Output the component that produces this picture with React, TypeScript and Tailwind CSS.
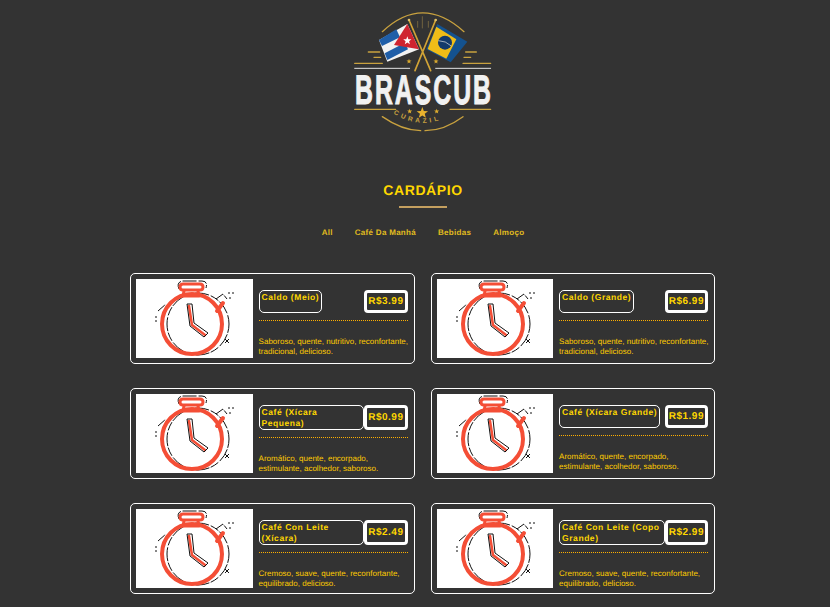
const ITEMS = [
  { name: 'Caldo (Meio)', price: 'R$3.99', desc: 'Saboroso, quente, nutritivo, reconfortante,\ntradicional, delicioso.' },
  { name: 'Caldo (Grande)', price: 'R$6.99', desc: 'Saboroso, quente, nutritivo, reconfortante,\ntradicional, delicioso.' },
  { name: 'Café (Xícara Pequena)', price: 'R$0.99', desc: 'Aromático, quente, encorpado,\nestimulante, acolhedor, saboroso.' },
  { name: 'Café (Xícara Grande)', price: 'R$1.99', desc: 'Aromático, quente, encorpado,\nestimulante, acolhedor, saboroso.' },
  { name: 'Café Con Leite (Xícara)', price: 'R$2.49', desc: 'Cremoso, suave, quente, reconfortante,\nequilibrado, delicioso.' },
  { name: 'Café Con Leite (Copo Grande)', price: 'R$2.99', desc: 'Cremoso, suave, quente, reconfortante,\nequilibrado, delicioso.' },
];

const CATEGORIES = ['All', 'Café Da Manhá', 'Bebidas', 'Almoço'];

function Star({ x, y, r, fill = '#d9a92e' }: { x: number; y: number; r: number; fill?: string }) {
  const pts = Array.from({ length: 10 }, (_, i) => {
    const a = -Math.PI / 2 + (i * Math.PI) / 5;
    const d = i % 2 === 0 ? r : r * 0.42;
    return `${x + d * Math.cos(a)},${y + d * Math.sin(a)}`;
  }).join(' ');
  return <polygon points={pts} fill={fill} />;
}

function Logo() {
  return (
    <svg width="170" height="140" viewBox="0 0 510 420" className="block">
      <g fill="none" stroke="#c9a23f" strokeLinecap="round">
        <path d="M130 95 Q250 -18 375 95" strokeWidth="4" />
        <path d="M130 350 Q190 392 245 392" strokeWidth="4" />
        <path d="M258 392 Q315 392 372 350" strokeWidth="4" />
        <path d="M236 64 V82 M250 50 V84 M268 64 V82" strokeWidth="2" stroke="#8f7a45" />
        <path d="M88 156 H122 M105 172 H125 M47 190 H130 M380 156 H412 M375 172 H395 M372 190 H455" strokeWidth="4" />
        <path d="M47 328 H170 M333 328 H455" strokeWidth="4" />
        <path d="M47 205 H212 M290 205 H455" strokeWidth="3" stroke="#e4e4e4" />
      </g>
      {/* cuba */}
      <polygon points="205,72 240,148 145,185 120,120" fill="#f2f2f2" />
      <polygon points="172,88 183,112 129,138 120,120" fill="#1f5ea8" />
      <polygon points="198,128 207,148 145,180 137,160" fill="#1f5ea8" />
      <polygon points="205,72 240,148 165,135" fill="#cf2430" />
      <Star x={205} y={122} r={13} fill="#ffffff" />
      {/* brazil */}
      <polygon points="295,72 385,125 335,187 262,148" fill="#14528f" />
      <polygon points="292,80 352,118 322,176 266,147" fill="#f0bd17" />
      <circle cx="318" cy="128" r="21" fill="#143a6b" />
      <path d="M298 122 Q320 122 337 138" stroke="#e8e8e8" strokeWidth="2" fill="none" />
      {/* poles */}
      <path d="M210 60 L275 212 M290 60 L228 212" stroke="#d1a336" strokeWidth="5" strokeLinecap="round" />
      <circle cx="210" cy="60" r="4" fill="#e3c266" />
      <circle cx="290" cy="60" r="4" fill="#e3c266" />
      <Star x={210} y={184} r={8} />
      <Star x={291} y={184} r={8} />
      <text
        transform="translate(48 311) scale(0.6 1)"
        fontFamily="'Liberation Sans', sans-serif"
        fontWeight="700"
        fontSize="124"
        letterSpacing="10"
        fill="#f1f1f1"
        stroke="#f1f1f1"
        strokeWidth="3"
      >
        BRASCUB
      </text>
      <Star x={212} y={334} r={8} fill="#e0ae2e" />
      <Star x={250} y={339} r={18} fill="#e8b32e" />
      <Star x={293} y={334} r={8} fill="#e0ae2e" />
      <path id="curazil-arc" d="M158 337 Q250 400 350 337" fill="none" />
      <text fontFamily="'Liberation Sans', sans-serif" fontSize="20" fontWeight="700" fill="#c9a23f" letterSpacing="9">
        <textPath href="#curazil-arc" startOffset="3%">
          CURAZIL
        </textPath>
      </text>
    </svg>
  );
}

function Stopwatch() {
  return (
    <svg width="117" height="79" viewBox="0 0 117 79" className="block">
      <g fill="none" stroke="#111" strokeWidth="1" strokeDasharray="9 1.5 14 2">
        <circle cx="62" cy="45" r="31" />
        <path d="M43 10 Q40 3 47 2 H66 Q72 2 70 9" />
        <path d="M80 20 L87 15 L91 20 M22 32 L30 25" />
      </g>
      <path d="M19 38 h2 M19 42 h2 M25 38 h2 M25 42 h2 M92 14 h2 M96 14 h2 M93 19 h2 M89 60 l4 4 M93 60 l-4 4" stroke="#111" strokeWidth="1" fill="none" />
      <g fill="none" stroke="#f44e36" strokeLinecap="round" strokeLinejoin="round">
        <circle cx="56" cy="45" r="30" strokeWidth="4" />
        <path d="M47 5 H64 Q67 5 67 8 Q67 11 64 11 H47 Q44 11 44 8 Q44 5 47 5 Z" strokeWidth="3" />
        <path d="M48 12 L47 17 H63 L62 12" strokeWidth="3" />
        <path d="M81 32 L87 24" strokeWidth="4" />
        <path d="M53 27 L56 46 L69 56" strokeWidth="2.5" />
      </g>
      <path d="M51 25 H56 L58 44 L72 54 L68 58 L54 47 Z" fill="none" stroke="#111" strokeWidth="1" />
    </svg>
  );
}

function MenuCard({ name, price, desc }: { name: string; price: string; desc: string }) {
  return (
    <div className="flex h-[91px] rounded-[5px] border border-white p-[5px]">
      <div className="h-[79px] w-[116.6px] shrink-0 overflow-hidden bg-white">
        <Stopwatch />
      </div>
      <div className="min-w-0 flex-1 pl-[6px] pr-[1px] pt-[11px]">
        <div className="flex items-stretch justify-between border-b border-dotted border-[#ffb000] pb-[7px]">
          <div className="rounded-[5px] border border-white px-[2px] pb-[1px] pt-[1px] text-[8.5px] font-bold leading-[10.5px] tracking-[0.55px] text-[#ffd700]">
            {name}
          </div>
          <div className="flex shrink-0 items-center rounded-[4px] border-[3px] border-white px-[1px] py-[3px] text-[10px] font-bold leading-[11px] tracking-[0.5px] text-[#ffd700]">
            {price}
          </div>
        </div>
        <p className="mt-[16px] whitespace-pre text-[8px] leading-[9.5px] text-[#ffcc00]">{desc}</p>
      </div>
    </div>
  );
}

export default function App() {
  return (
    <div className="min-h-[607px] bg-[#333333] pb-[13px] pl-4 font-['Liberation_Sans',Arial,sans-serif] [text-rendering:geometricPrecision]">
      <div className="flex flex-col items-center">
        <div className="ml-[2px]">
          <Logo />
        </div>
        <h2 className="mt-[41px] text-[14px] font-bold leading-[18px] tracking-[0.6px] text-[#ffd700]">CARDÁPIO</h2>
        <div className="mt-[7px] h-[2px] w-[48px] bg-[#c49f5f]" />
        <nav className="mt-[20px] flex gap-[22px] text-[8px] font-bold leading-[10px] tracking-[0.3px] text-[#e2bd1e]">
          {CATEGORIES.map(c => (
            <span key={c}>{c}</span>
          ))}
        </nav>
      </div>
      <div className="ml-[114px] mt-[35px] grid w-[585px] grid-cols-2 gap-x-[16px] gap-y-[24px]">
        {ITEMS.map(item => (
          <MenuCard key={item.name} {...item} />
        ))}
      </div>
    </div>
  );
}
